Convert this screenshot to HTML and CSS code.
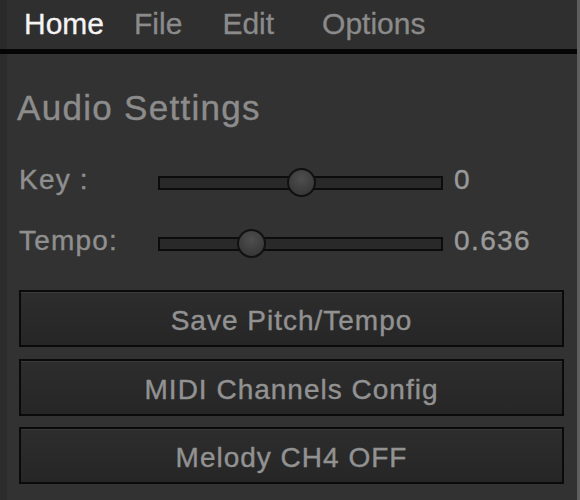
FILE: index.html
```html
<!DOCTYPE html>
<html>
<head>
<meta charset="utf-8">
<link rel="stylesheet" href="styles.css">
</head>
<body>
<div class="app">
  <nav class="menubar">
    <span class="menu-item active">Home</span>
    <span class="menu-item file">File</span>
    <span class="menu-item edit">Edit</span>
    <span class="menu-item options">Options</span>
  </nav>
  <main class="panel">
    <h1 class="title">Audio Settings</h1>
    <div class="row">
      <span class="label">Key :</span>
      <div class="slider"><div class="track"></div><div class="knob" style="left: 50%"></div></div>
      <span class="value">0</span>
    </div>
    <div class="row">
      <span class="label">Tempo:</span>
      <div class="slider"><div class="track"></div><div class="knob" style="left: 32.6%"></div></div>
      <span class="value">0.636</span>
    </div>
    <div class="buttons">
      <button class="btn">Save Pitch/Tempo</button>
      <button class="btn">MIDI Channels Config</button>
      <button class="btn">Melody CH4 OFF</button>
    </div>
  </main>
</div>
</body>
</html>
```
FILE: styles.css
```css
* { box-sizing: border-box; }
html, body { margin: 0; padding: 0; }
body {
  background: #323232;
  font-family: "Liberation Sans", sans-serif;
  width: 580px;
  height: 500px;
  overflow: hidden;
}
.app {
  height: 500px;
  display: flex;
  flex-direction: column;
  border-right: 3px solid #5e5e5e;
}
.menubar {
  height: 54px;
  flex: none;
  background: #2f2f2f;
  border-bottom: 5px solid #050505;
  box-shadow: inset 7px 0 0 #2a2a2a;
  display: flex;
  padding-left: 24px;
  font-size: 30px;
  line-height: 47px;
  color: #8b8b8b;
  -webkit-text-stroke: 0.3px currentColor;
}
.menu-item.active { color: #f4f4f4; }
.menu-item.file { margin-left: 30px; }
.menu-item.edit { margin-left: 40px; }
.menu-item.options { margin-left: 48px; }

.panel {
  flex: 1;
  box-shadow: inset 7px 0 0 #2c2c2c;
  padding: 34px 10px 0 19px;
  -webkit-text-stroke: 0.4px currentColor;
}
.title {
  margin: 0 0 40px -2px;
  font-size: 35px;
  font-weight: normal;
  line-height: 40px;
  letter-spacing: 1.3px;
  color: #8c8c8c;
}
.row {
  display: flex;
  height: 30px;
  margin-bottom: 31px;
}
.label {
  width: 139px;
  font-size: 28px;
  line-height: 24px;
  letter-spacing: 1.2px;
  color: #8f8f8f;
}
.slider {
  position: relative;
  width: 285px;
  height: 30px;
  display: flex;
  align-items: center;
}
.track {
  width: 100%;
  height: 14px;
  border: 2px solid #0c0c0c;
  background: #292929;
}
.knob {
  position: absolute;
  top: 0;
  width: 29px;
  height: 29px;
  margin-left: -14px;
  border-radius: 50%;
  border: 2px solid #111;
  background: radial-gradient(circle at 50% 35%, #4e4e4e, #3a3a3a 70%);
}
.value {
  margin-left: 11px;
  font-size: 28px;
  line-height: 24px;
  letter-spacing: 1.4px;
  color: #9a9a9a;
}
.buttons {
  margin-top: 6px;
  display: flex;
  flex-direction: column;
  gap: 11.5px;
  padding-right: 3px;
}
.btn {
  height: 57px;
  width: 100%;
  border: 2px solid #0a0a0a;
  background: linear-gradient(#2d2d2d, #262626);
  box-shadow: inset 0 1px 0 #3a3a3a;
  font-family: "Liberation Sans", sans-serif;
  font-size: 28px;
  letter-spacing: 1px;
  color: #929292;
  -webkit-text-stroke: 0.4px currentColor;
  padding: 5px 0 0;
  line-height: 30px;
}
```
